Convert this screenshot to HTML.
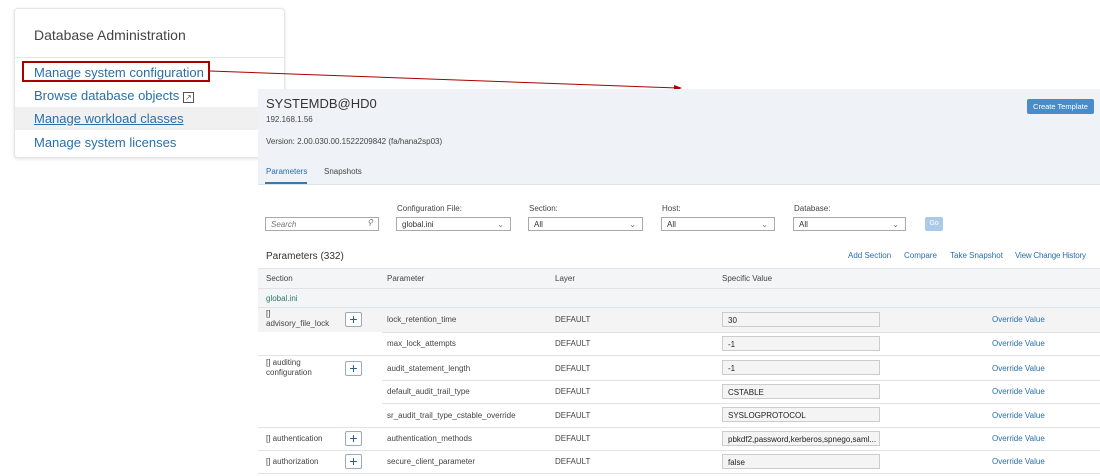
<!DOCTYPE html>
<html><head><meta charset="utf-8"><style>
*{margin:0;padding:0;box-sizing:border-box}
body{width:1100px;height:476px;background:#fff;position:relative;overflow:hidden;font-family:"Liberation Sans",sans-serif;color:#333}
.a{position:absolute;white-space:nowrap}
.card{position:absolute;left:14px;top:8px;width:271px;height:150px;background:#fff;border:1px solid #e6e6e6;border-radius:4px;box-shadow:0 1px 3px rgba(0,0,0,.12)}
.lk{color:#2a6fa8;font-size:13px}
.s{font-size:8px;color:#444}
.inp{position:absolute;height:14px;border:1px solid #aaa;background:#fff;font-size:8px;padding:2px 5px;color:#333}
.v{position:absolute;left:722px;width:158px;height:15px;border:1px solid #ccc;background:#f4f4f4;font-size:8px;padding:3px 5px;color:#222}
.ov{position:absolute;left:992px;font-size:8px;color:#2a6fa8}
.pl{position:absolute;left:345px;width:17px;height:15px;border:1px solid #9ab;border-radius:2px;background:#fff;color:#2a5a8a;font-size:14px;line-height:12px;text-align:center}
.hl{position:absolute;height:1px;background:#e3e3e3}
.tl{position:absolute;top:251px;font-size:8px;color:#2a6fa8;white-space:nowrap}
</style></head><body>
<div class="card"></div>
<div class="a" style="left:34px;top:27px;font-size:14px;color:#444">Database Administration</div>
<div class="a" style="left:15px;top:57px;width:270px;height:1px;background:#e6e6e6"></div>
<div class="a" style="left:15px;top:107px;width:243px;height:23px;background:#f0f0f0"></div>
<div class="a lk" style="left:34px;top:65px">Manage system configuration</div>
<div class="a" style="left:22px;top:61px;width:188px;height:21px;border:2px solid #a00"></div>
<div class="a lk" style="left:34px;top:88px">Browse database objects <span style="display:inline-block;width:11px;height:11px;border:1px solid #555;font-size:8px;line-height:9px;text-align:center;color:#555">↗</span></div>
<div class="a lk" style="left:34px;top:111px;text-decoration:underline">Manage workload classes</div>
<div class="a lk" style="left:34px;top:135px">Manage system licenses</div>
<svg class="a" style="left:0;top:0" width="1100" height="100"><line x1="210" y1="71" x2="678" y2="88" stroke="#a00" stroke-width="1"/><polygon points="682,88 674,85 674,91" fill="#a00"/></svg>
<div class="a" style="left:258px;top:89px;width:842px;height:96px;background:#eff3f8;border-bottom:1px solid #dde3ea"></div>
<div class="a" style="left:266px;top:96px;font-size:13px;color:#333">SYSTEMDB@HD0</div>
<div class="a s" style="left:266px;top:115px">192.168.1.56</div>
<div class="a s" style="left:266px;top:137px">Version: 2.00.030.00.1522209842 (fa/hana2sp03)</div>
<div class="a" style="left:1027px;top:99px;width:67px;height:15px;background:#4a8cc9;border-radius:2px;color:#fff;font-size:7.5px;line-height:15px;text-align:center">Create Template</div>
<div class="a" style="left:266px;top:167px;font-size:8px;color:#2a6fa8">Parameters</div>
<div class="a" style="left:265px;top:182px;width:42px;height:2px;background:#3a78b0"></div>
<div class="a s" style="left:324px;top:167px">Snapshots</div>
<div class="inp" style="left:265px;top:217px;width:114px;font-style:italic;color:#777">Search<span style="position:absolute;right:5px;top:0">⚲</span></div>
<div class="a s" style="left:397px;top:204px">Configuration File:</div>
<div class="inp" style="left:396px;top:217px;width:115px">global.ini<span style="position:absolute;right:6px;color:#777">⌄</span></div>
<div class="a s" style="left:529px;top:204px">Section:</div>
<div class="inp" style="left:528px;top:217px;width:115px">All<span style="position:absolute;right:6px;color:#777">⌄</span></div>
<div class="a s" style="left:662px;top:204px">Host:</div>
<div class="inp" style="left:661px;top:217px;width:114px">All<span style="position:absolute;right:6px;color:#777">⌄</span></div>
<div class="a s" style="left:794px;top:204px">Database:</div>
<div class="inp" style="left:793px;top:217px;width:113px">All<span style="position:absolute;right:6px;color:#777">⌄</span></div>
<div class="a" style="left:925px;top:217px;width:18px;height:14px;background:#a9cbe8;border-radius:2px;color:#fff;font-size:7px;line-height:14px;text-align:center">Go</div>
<div class="a" style="left:266px;top:251px;font-size:10px;color:#333">Parameters (332)</div>
<div class="tl" style="left:848px">Add Section</div>
<div class="tl" style="left:904px">Compare</div>
<div class="tl" style="left:950px">Take Snapshot</div>
<div class="tl" style="left:1015px;letter-spacing:-0.2px">View Change History</div>
<div class="a" style="left:258px;top:268px;width:842px;height:39px;background:#f4f5f6"></div>
<div class="hl" style="left:258px;top:268px;width:842px"></div>
<div class="hl" style="left:258px;top:288px;width:842px"></div>
<div class="a s" style="left:266px;top:274px">Section</div>
<div class="a s" style="left:387px;top:274px">Parameter</div>
<div class="a s" style="left:555px;top:274px">Layer</div>
<div class="a s" style="left:722px;top:274px">Specific Value</div>
<div class="a" style="left:266px;top:294px;font-size:8px;color:#2a7a6a">global.ini</div>
<div class="a" style="left:258px;top:307px;width:842px;height:25px;background:#f4f4f4"></div>
<div class="hl" style="left:258px;top:307px;width:842px"></div>
<div class="hl" style="left:382px;top:332px;width:718px"></div>
<div class="hl" style="left:258px;top:355px;width:842px"></div>
<div class="hl" style="left:382px;top:380px;width:718px"></div>
<div class="hl" style="left:382px;top:403px;width:718px"></div>
<div class="hl" style="left:258px;top:427px;width:842px"></div>
<div class="hl" style="left:258px;top:450px;width:842px"></div>
<div class="hl" style="left:258px;top:473px;width:842px"></div>
<div class="a s" style="left:266px;top:309px;line-height:10px">[]<br>advisory_file_lock</div>
<div class="pl" style="top:312px">+</div>
<div class="a s" style="left:266px;top:358px;line-height:10px">[] auditing<br>configuration</div>
<div class="pl" style="top:361px">+</div>
<div class="a s" style="left:266px;top:434px">[] authentication</div>
<div class="pl" style="top:431px">+</div>
<div class="a s" style="left:266px;top:457px">[] authorization</div>
<div class="pl" style="top:454px">+</div>
<div class="a s" style="left:387px;top:315px">lock_retention_time</div>
<div class="a s" style="left:387px;top:339px">max_lock_attempts</div>
<div class="a s" style="left:387px;top:364px">audit_statement_length</div>
<div class="a s" style="left:387px;top:387px">default_audit_trail_type</div>
<div class="a s" style="left:387px;top:411px">sr_audit_trail_type_cstable_override</div>
<div class="a s" style="left:387px;top:434px">authentication_methods</div>
<div class="a s" style="left:387px;top:457px">secure_client_parameter</div>
<div class="a s" style="left:555px;top:315px">DEFAULT</div>
<div class="a s" style="left:555px;top:339px">DEFAULT</div>
<div class="a s" style="left:555px;top:364px">DEFAULT</div>
<div class="a s" style="left:555px;top:387px">DEFAULT</div>
<div class="a s" style="left:555px;top:411px">DEFAULT</div>
<div class="a s" style="left:555px;top:434px">DEFAULT</div>
<div class="a s" style="left:555px;top:457px">DEFAULT</div>
<div class="v" style="top:312px">30</div>
<div class="v" style="top:336px">-1</div>
<div class="v" style="top:360px">-1</div>
<div class="v" style="top:384px">CSTABLE</div>
<div class="v" style="top:407px">SYSLOGPROTOCOL</div>
<div class="v" style="top:431px">pbkdf2,password,kerberos,spnego,saml...</div>
<div class="v" style="top:454px">false</div>
<div class="ov" style="top:315px">Override Value</div>
<div class="ov" style="top:339px">Override Value</div>
<div class="ov" style="top:364px">Override Value</div>
<div class="ov" style="top:387px">Override Value</div>
<div class="ov" style="top:411px">Override Value</div>
<div class="ov" style="top:434px">Override Value</div>
<div class="ov" style="top:457px">Override Value</div>
</body></html>
